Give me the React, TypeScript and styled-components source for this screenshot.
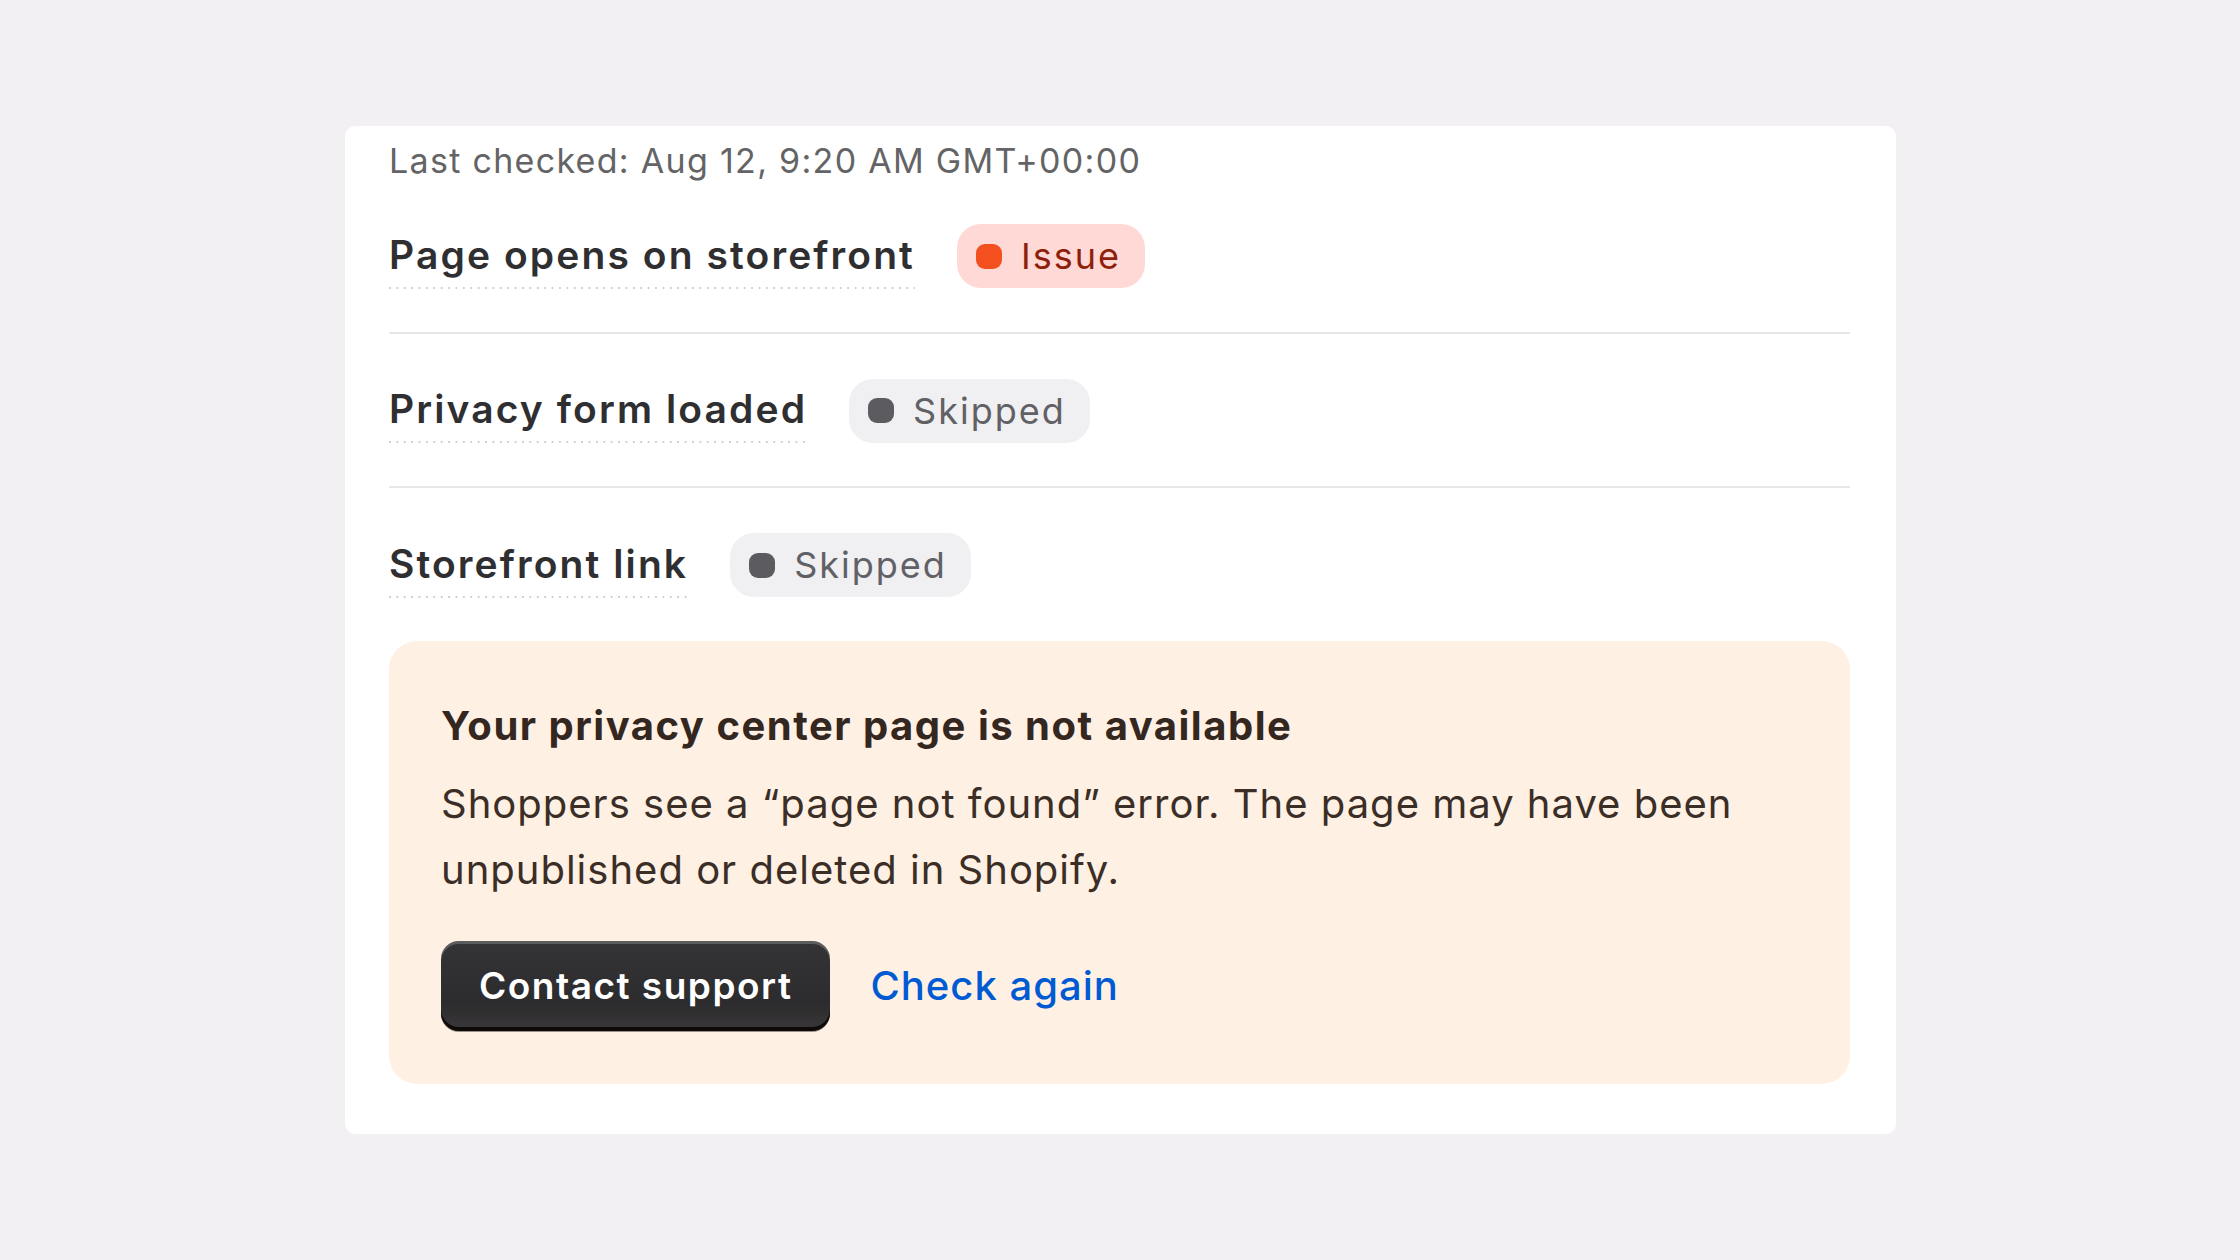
import React from 'react'
import styled, { createGlobalStyle } from 'styled-components'

type Tone = 'critical' | 'neutral'

type Check = {
  label: string
  status: string
  tone: Tone
}

const checks: Check[] = [
  { label: 'Page opens on storefront', status: 'Issue', tone: 'critical' },
  { label: 'Privacy form loaded', status: 'Skipped', tone: 'neutral' },
  { label: 'Storefront link', status: 'Skipped', tone: 'neutral' },
]

const toneColors = {
  critical: { bg: '#FFD9D5', dot: '#F4501F', text: '#8E1F0B' },
  neutral: { bg: '#F0EFF1', dot: '#5C5B60', text: '#616165' },
}

const GlobalStyle = createGlobalStyle`
  html, body {
    margin: 0;
    padding: 0;
    background: #F2F0F3;
  }
  body {
    font-family: Inter, "Noto Sans", "Liberation Sans", sans-serif;
    -webkit-font-smoothing: antialiased;
  }
`

const Page = styled.div`
  min-height: 1260px;
  padding: 126px 0 0 345px;
  box-sizing: border-box;
`

const Card = styled.section`
  width: 1551px;
  box-sizing: border-box;
  background: #ffffff;
  border-radius: 10px;
  padding: 17px 46px 50px 44px;
`

const LastChecked = styled.div`
  font-size: 34px;
  line-height: 36px;
  color: #646466;
  letter-spacing: 1.3px;
`

const Row = styled.div<{ $divider: boolean }>`
  display: flex;
  align-items: baseline;
  gap: 42px;
  padding: 45px 0 43px;
  border-bottom: ${(p) => (p.$divider ? '2px solid #E7E6E9' : 'none')};
`

const Label = styled.span`
  font-size: 39px;
  line-height: 44px;
  font-weight: 600;
  color: #2F2F31;
  letter-spacing: 2.1px;
  padding-bottom: 12px;
  background-image: linear-gradient(to right, #CFCED3 2px, transparent 2px);
  background-size: 7.4px 2px;
  background-repeat: repeat-x;
  background-position: left bottom;
`

const Badge = styled.span<{ $tone: Tone }>`
  display: inline-flex;
  align-items: center;
  gap: 19px;
  height: 64px;
  padding: 0 24px 0 19px;
  border-radius: 24px;
  background: ${(p) => toneColors[p.$tone].bg};
  color: ${(p) => toneColors[p.$tone].text};
  font-size: 36px;
  line-height: 64px;
  letter-spacing: 2px;
`

const Dot = styled.span<{ $tone: Tone }>`
  width: 26px;
  height: 25px;
  border-radius: 9px;
  background: ${(p) => toneColors[p.$tone].dot};
  flex-shrink: 0;
`

const Banner = styled.div`
  background: #FFF0E4;
  border-radius: 28px;
  padding: 59px 52px 53px;
`

const BannerTitle = styled.h2`
  margin: 0;
  font-size: 40px;
  line-height: 52px;
  font-weight: 700;
  color: #33271F;
  letter-spacing: 1.5px;
`

const BannerText = styled.p`
  margin: 19px 0 0;
  font-size: 40px;
  line-height: 66px;
  color: #3A2E26;
  letter-spacing: 1px;
  max-width: 1340px;
`

const Actions = styled.div`
  display: flex;
  align-items: center;
  gap: 40px;
  margin-top: 38px;
`

const PrimaryButton = styled.button`
  height: 90px;
  padding: 0 38px;
  border: none;
  border-radius: 18px;
  background: linear-gradient(180deg, #343335 0%, #2C2B2D 70%, #3A3839 100%);
  box-shadow:
    inset 0 3px 0 rgba(255, 255, 255, 0.2),
    inset 0 -4px 0 #0E0A08,
    0 1px 0 rgba(0, 0, 0, 0.4);
  color: #ffffff;
  font-family: inherit;
  font-size: 37px;
  font-weight: 600;
  letter-spacing: 1.5px;
  cursor: pointer;
`

const LinkButton = styled.button`
  border: none;
  background: none;
  padding: 0;
  color: #005BD3;
  font-family: inherit;
  font-size: 40px;
  font-weight: 500;
  letter-spacing: 1px;
  cursor: pointer;
`

export default function App() {
  return (
    <>
      <GlobalStyle />
      <Page>
        <Card>
          <LastChecked>Last checked: Aug 12, 9:20 AM GMT+00:00</LastChecked>
          {checks.map((check, i) => (
            <Row key={check.label} $divider={i < checks.length - 1}>
              <Label>{check.label}</Label>
              <Badge $tone={check.tone}>
                <Dot $tone={check.tone} />
                {check.status}
              </Badge>
            </Row>
          ))}
          <Banner>
            <BannerTitle>Your privacy center page is not available</BannerTitle>
            <BannerText>
              Shoppers see a “page not found” error. The page may have been unpublished or deleted in
              Shopify.
            </BannerText>
            <Actions>
              <PrimaryButton>Contact support</PrimaryButton>
              <LinkButton>Check again</LinkButton>
            </Actions>
          </Banner>
        </Card>
      </Page>
    </>
  )
}
